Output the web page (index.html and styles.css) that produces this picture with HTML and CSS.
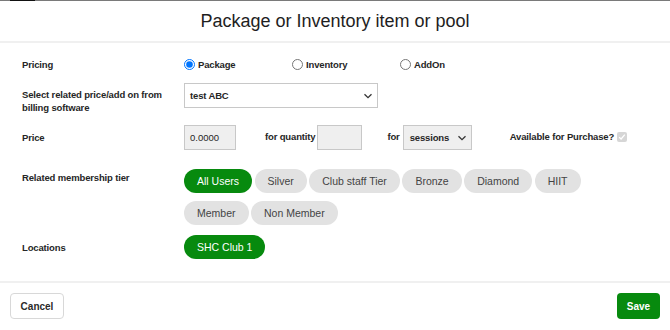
FILE: index.html
```html
<!DOCTYPE html>
<html lang="en">
<head>
    <meta charset="UTF-8">
    <meta name="viewport" content="width=device-width, initial-scale=1.0">
    <title>Package or Inventory item or pool</title>
    <link rel="stylesheet" href="styles.css">
</head>
<body>
    <div class="topbar"><span class="topbar-thumb"></span></div>
    <div class="modal">
        <div class="modal-header">
            <h1>Package or Inventory item or pool</h1>
        </div>
        <div class="modal-body">
            <div class="row row-pricing">
                <div class="field-label">Pricing</div>
                <div class="radios">
                    <label class="radio"><input type="radio" name="pricing" checked> Package</label>
                    <label class="radio"><input type="radio" name="pricing"> Inventory</label>
                    <label class="radio"><input type="radio" name="pricing"> AddOn</label>
                </div>
            </div>
            <div class="row row-select">
                <div class="field-label">Select related price/add on from billing software</div>
                <div class="select select-wide">
                    <span>test ABC</span>
                    <svg width="10" height="6" viewBox="0 0 10 6"><path d="M1.5 1.2 5 4.6 8.5 1.2" fill="none" stroke="#333" stroke-width="1.3"/></svg>
                </div>
            </div>
            <div class="row row-price">
                <div class="field-label">Price</div>
                <div class="price-line">
                    <div class="text-input price-input">0.0000</div>
                    <span class="inline-label label-qty">for quantity</span>
                    <div class="text-input qty-input"></div>
                    <span class="inline-label label-for">for</span>
                    <div class="select select-small">
                        <span>sessions</span>
                        <svg width="10" height="6" viewBox="0 0 10 6"><path d="M1.5 1.2 5 4.6 8.5 1.2" fill="none" stroke="#333" stroke-width="1.3"/></svg>
                    </div>
                    <span class="inline-label label-avail">Available for Purchase?</span>
                    <span class="checkbox">
                        <svg width="8" height="8" viewBox="0 0 8 8"><path d="M1.2 4.2 3.1 6 6.8 1.6" fill="none" stroke="#fff" stroke-width="1.3"/></svg>
                    </span>
                </div>
            </div>
            <div class="row row-tier">
                <div class="field-label">Related membership tier</div>
                <div class="pills">
                    <span class="pill active">All Users</span>
                    <span class="pill">Silver</span>
                    <span class="pill">Club staff Tier</span>
                    <span class="pill">Bronze</span>
                    <span class="pill">Diamond</span>
                    <span class="pill">HIIT</span>
                    <span class="pill">Member</span>
                    <span class="pill">Non Member</span>
                </div>
            </div>
            <div class="row row-locations">
                <div class="field-label">Locations</div>
                <div class="pills">
                    <span class="pill active">SHC Club 1</span>
                </div>
            </div>
        </div>
        <div class="modal-footer">
            <button class="btn btn-cancel">Cancel</button>
            <button class="btn btn-save">Save</button>
        </div>
    </div>
</body>
</html>
```
FILE: styles.css
```css
body {
    margin: 0;
    font-family: "Liberation Sans", Arial, sans-serif;
    color: #222;
    background: #fff;
}
.topbar {
    height: 1px;
    background: #7a7a7a;
    padding-left: 10px;
}
.topbar-thumb {
    display: block;
    width: 25px;
    height: 1px;
    background: #111;
}
.modal {
    width: 670px;
}
.modal-header {
    height: 40px;
    border-bottom: 2px solid #f0f0f0;
    display: flex;
    align-items: center;
    justify-content: center;
}
h1 {
    margin: 0;
    font-size: 18px;
    font-weight: normal;
    color: #1e1e1e;
}
.modal-body {
    padding: 11px 22px 0;
    height: 227px;
    border-bottom: 2px solid #f0f0f0;
}
.row {
    display: flex;
}
.field-label {
    width: 162px;
    flex-shrink: 0;
    font-size: 9.5px;
    font-weight: bold;
    letter-spacing: -0.15px;
    line-height: 13px;
    color: #262626;
}
.row-pricing {
    height: 20px;
    align-items: center;
}
.row-select {
    margin-top: 9px;
    height: 25px;
}
.row-select .field-label {
    padding-top: 5px;
    padding-right: 20px;
    box-sizing: border-box;
}
.row-price {
    margin-top: 17px;
    height: 25px;
    align-items: center;
}
.row-tier {
    margin-top: 19px;
}
.row-tier .field-label {
    padding-top: 2px;
}
.row-locations {
    margin-top: 10px;
    align-items: center;
}
.radios {
    display: flex;
}
.radio {
    width: 108px;
    display: flex;
    align-items: center;
    gap: 3px;
    font-size: 9.5px;
    font-weight: bold;
    letter-spacing: -0.15px;
    color: #262626;
}
.radio input {
    margin: 0;
    width: 11px;
    height: 11px;
}
.select {
    height: 25px;
    box-sizing: border-box;
    border: 1px solid #c8c8c8;
    display: flex;
    align-items: center;
    justify-content: space-between;
    padding: 0 4px 0 5px;
    font-size: 9.5px;
    font-weight: bold;
    letter-spacing: -0.15px;
    color: #262626;
}
.select-wide {
    width: 194px;
    background: #fff;
}
.select-small {
    width: 69px;
    background: #efefef;
    padding-left: 6px;
}
.price-line {
    display: flex;
    align-items: center;
}
.text-input {
    height: 25px;
    box-sizing: border-box;
    border: 1px solid #c8c8c8;
    background: #efefef;
    font-size: 9.5px;
    color: #262626;
    display: flex;
    align-items: center;
    padding-left: 5px;
}
.price-input {
    width: 52px;
}
.qty-input {
    width: 45px;
}
.inline-label {
    font-size: 9.5px;
    font-weight: bold;
    letter-spacing: -0.15px;
    color: #262626;
    white-space: nowrap;
    margin-bottom: 2px;
}
.label-qty {
    margin-left: 29px;
    margin-right: 2px;
}
.label-for {
    margin-left: 25px;
    margin-right: 3px;
}
.label-avail {
    margin-left: 38px;
    margin-right: 3px;
}
.checkbox {
    width: 10px;
    height: 10px;
    border-radius: 2px;
    background: #d6d6d6;
    display: flex;
    align-items: center;
    justify-content: center;
    margin-bottom: 2px;
}
.pills {
    display: flex;
    flex-wrap: wrap;
    gap: 8px 2.5px;
    width: 420px;
}
.pill {
    height: 24px;
    padding: 0 13px;
    border-radius: 12px;
    background: #e2e2e2;
    color: #444;
    font-size: 10.5px;
    display: flex;
    align-items: center;
}
.pill.active {
    background: #078a0e;
    color: #fff;
}
.modal-footer {
    display: flex;
    justify-content: space-between;
    padding: 10px 10px 0;
}
.btn {
    height: 26px;
    border-radius: 4px;
    font-family: inherit;
    font-size: 10px;
    font-weight: bold;
    cursor: pointer;
}
.btn-cancel {
    width: 54px;
    background: #fff;
    border: 1px solid #d8d8d8;
    color: #2a2a2a;
}
.btn-save {
    width: 43px;
    background: #078a0e;
    border: none;
    color: #fff;
}
```
